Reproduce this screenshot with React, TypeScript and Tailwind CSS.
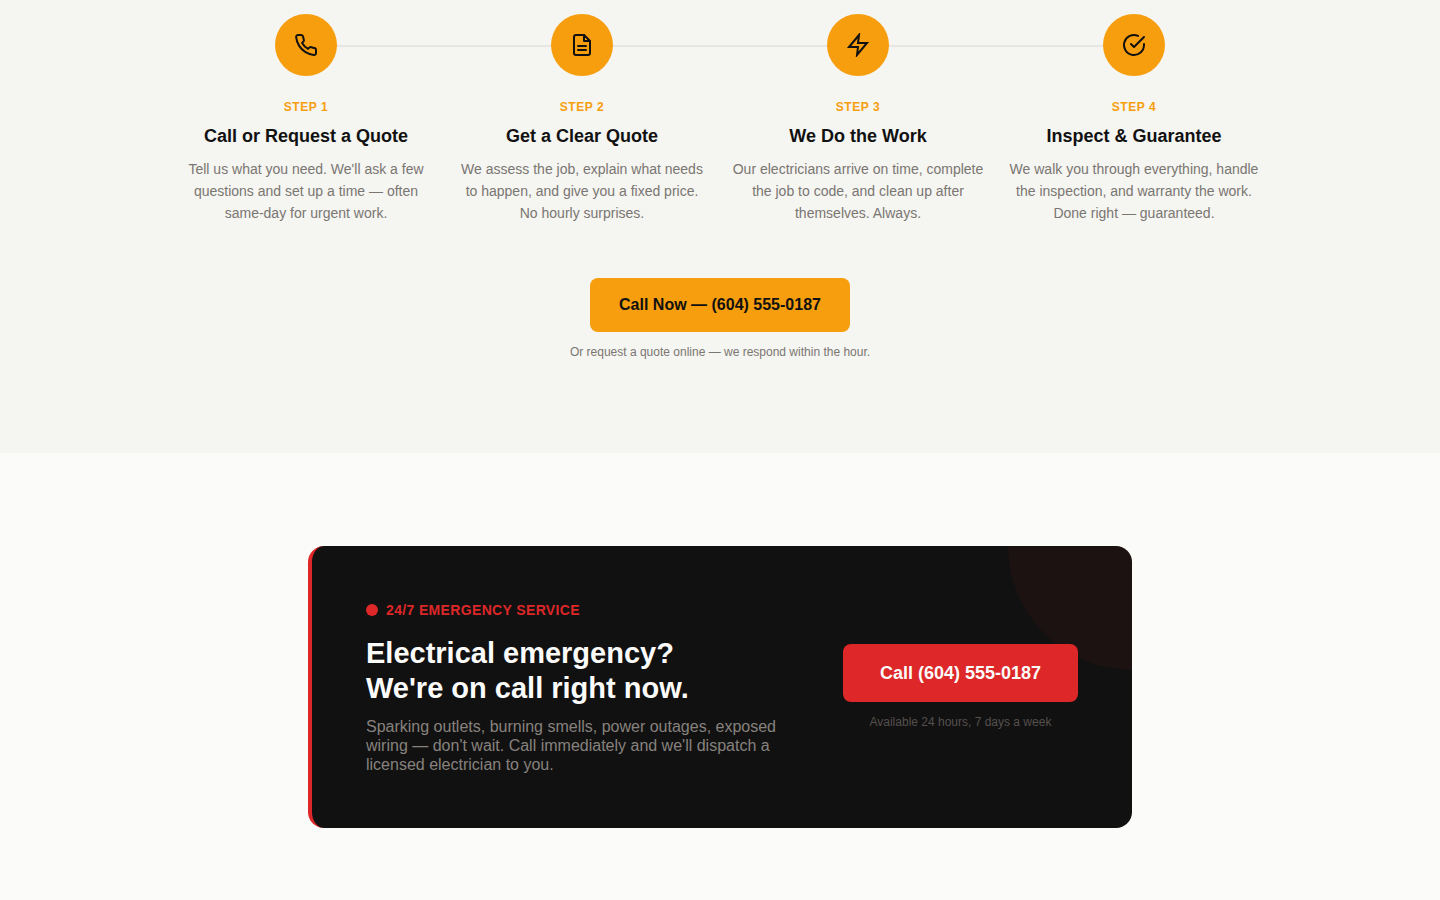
import type { ReactNode } from "react";

type Step = { icon: ReactNode; title: string; text: string };

function Icon({ children, sharp = false }: { children: ReactNode; sharp?: boolean }) {
  return (
    <svg
      viewBox="0 0 24 24"
      fill="none"
      stroke="currentColor"
      strokeWidth={2}
      strokeLinecap={sharp ? "butt" : "round"}
      strokeLinejoin={sharp ? "miter" : "round"}
      aria-hidden="true"
      className="size-6 text-[#111111]"
    >
      {children}
    </svg>
  );
}

const steps: Step[] = [
  {
    icon: (
      <Icon>
        <path d="M22 16.92v3a2 2 0 0 1-2.18 2 19.79 19.79 0 0 1-8.63-3.07 19.5 19.5 0 0 1-6-6 19.79 19.79 0 0 1-3.07-8.67A2 2 0 0 1 4.11 2h3a2 2 0 0 1 2 1.72 12.84 12.84 0 0 0 .7 2.81 2 2 0 0 1-.45 2.11L8.09 9.91a16 16 0 0 0 6 6l1.27-1.27a2 2 0 0 1 2.11-.45 12.84 12.84 0 0 0 2.81.7A2 2 0 0 1 22 16.92z" />
      </Icon>
    ),
    title: "Call or Request a Quote",
    text: "Tell us what you need. We'll ask a few questions and set up a time — often same-day for urgent work.",
  },
  {
    icon: (
      <Icon>
        <path d="M14 2H6a2 2 0 0 0-2 2v16a2 2 0 0 0 2 2h12a2 2 0 0 0 2-2V8z" />
        <path d="M14 2v6h6M16 13H8M16 17H8" />
      </Icon>
    ),
    title: "Get a Clear Quote",
    text: "We assess the job, explain what needs to happen, and give you a fixed price. No hourly surprises.",
  },
  {
    icon: (
      <Icon sharp>
        <path d="M13 2 3 14h9l-1 8 10-12h-9l1-8z" />
      </Icon>
    ),
    title: "We Do the Work",
    text: "Our electricians arrive on time, complete the job to code, and clean up after themselves. Always.",
  },
  {
    icon: (
      <Icon>
        <path d="M22 11.08V12a10 10 0 1 1-5.93-9.14" />
        <path d="M22 4 12 14.01l-3-3" />
      </Icon>
    ),
    title: "Inspect & Guarantee",
    text: "We walk you through everything, handle the inspection, and warranty the work. Done right — guaranteed.",
  },
];

function StepItem({ step, number }: { step: Step; number: number }) {
  return (
    <li className="group relative flex flex-col items-center text-center">
      <span
        aria-hidden="true"
        className="absolute top-[31px] left-1/2 h-0.5 w-[calc(100%+24px)] bg-[#e8e6e2] group-last:hidden"
      />
      <span className="relative z-10 flex size-[62px] items-center justify-center rounded-full bg-[#f79e0e]">
        {step.icon}
      </span>
      <p className="mt-[23px] text-xs leading-4 font-bold tracking-wider text-[#f79e0e]">STEP {number}</p>
      <h3 className="mt-[9px] text-lg leading-6 font-bold text-[#111111]">{step.title}</h3>
      <p className="mt-[10px] text-sm leading-[22px] text-[#7a7672]">{step.text}</p>
    </li>
  );
}

function Process() {
  return (
    <section className="bg-[#f5f5f1] px-8 pt-[14px] pb-[93px]">
      <ol className="mx-auto grid max-w-[1080px] grid-cols-2 gap-6 lg:grid-cols-4">
        {steps.map((step, i) => (
          <StepItem key={step.title} step={step} number={i + 1} />
        ))}
      </ol>
      <div className="mt-[54px] flex flex-col items-center">
        <a
          href="tel:6045550187"
          className="rounded-lg bg-[#f79e0e] px-[29px] py-[15px] text-base leading-6 font-bold text-[#111111]"
        >
          Call Now — (604) 555-0187
        </a>
        <p className="mt-3 text-xs leading-4 text-[#7a7672]">
          Or request a quote online — we respond within the hour.
        </p>
      </div>
    </section>
  );
}

function Emergency() {
  return (
    <section className="bg-[#fbfbfa] px-8 pt-[93px] pb-[72px]">
      <div className="relative mx-auto flex max-w-[824px] flex-wrap items-center justify-between gap-8 overflow-hidden rounded-2xl border-l-4 border-[#dd2728] bg-[#111111] p-[54px]">
        <span
          aria-hidden="true"
          className="absolute top-0 right-0 size-[248px] translate-x-1/2 -translate-y-1/2 rounded-full bg-[#dd2728]/6"
        />
        <div className="relative max-w-[412px]">
          <p className="flex items-center gap-2 text-sm leading-5 font-bold tracking-wide text-[#dd2728]">
            <span className="size-3 rounded-full bg-[#dd2728]" />
            24/7 EMERGENCY SERVICE
          </p>
          <h2 className="mt-4 text-[29px] leading-[35px] font-bold text-[#fbfbfa]">
            Electrical emergency?
            <br />
            We're on call right now.
          </h2>
          <p className="mt-[11px] text-base leading-[19px] text-[#87827e]">
            Sparking outlets, burning smells, power outages, exposed wiring — don't wait. Call immediately and
            we'll dispatch a licensed electrician to you.
          </p>
        </div>
        <div className="relative flex flex-col items-center">
          <a
            href="tel:6045550187"
            className="rounded-lg bg-[#dd2728] px-[37px] py-[17px] text-lg leading-6 font-bold text-[#fbfbfa]"
          >
            Call (604) 555-0187
          </a>
          <p className="mt-3 text-xs leading-4 text-[#55504d]">Available 24 hours, 7 days a week</p>
        </div>
      </div>
    </section>
  );
}

export default function App() {
  return (
    <main className="min-h-screen bg-[#fbfbfa] font-['Liberation_Sans',Arial,sans-serif]">
      <Process />
      <Emergency />
    </main>
  );
}
